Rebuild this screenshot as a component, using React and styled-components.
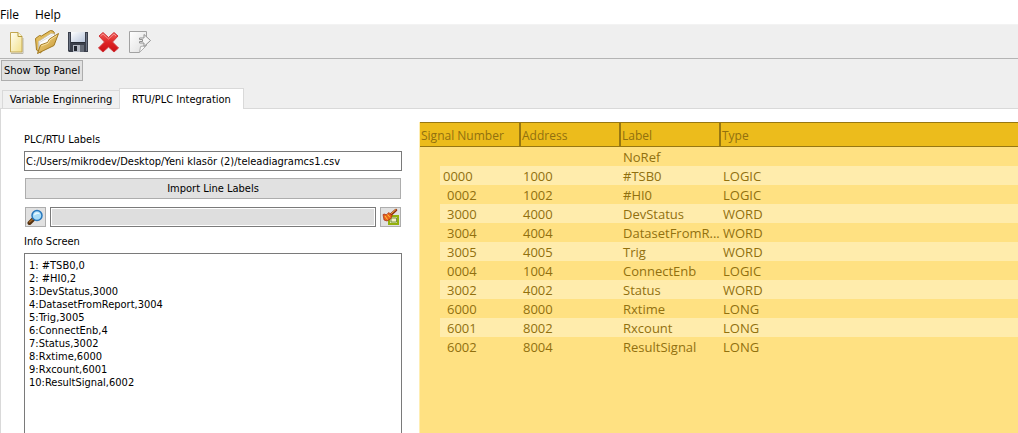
import React, { useState } from "react";
import styled, { createGlobalStyle } from "styled-components";

const uiFont = `"DejaVu Sans Condensed", "Noto Sans", sans-serif`;
const gridFont = `"Open Sans", "Noto Sans", sans-serif`;

const Global = createGlobalStyle`
  * { box-sizing: border-box; }
  html, body { margin: 0; height: 100%; overflow: hidden; }
  #root { height: 100%; }
  button, input, textarea { font: inherit; color: inherit; border-radius: 0; }
`;

const Window = styled.div`
  display: flex;
  flex-direction: column;
  height: 100vh;
  background: #efefef;
  color: #000;
  font: 11px/13px ${uiFont};
`;

const MenuBar = styled.nav`
  display: flex;
  gap: 16px;
  height: 25px;
  padding-top: 6px;
  background: #fff;
  border-bottom: 1px solid #f3f3f3;
`;

const MenuItem = styled.button`
  height: 17px;
  padding: 0;
  border: 0;
  background: none;
  font: 12px/17px ${gridFont};
`;

const ToolBar = styled.div`
  display: flex;
  align-items: center;
  gap: 6px;
  height: 34px;
  padding-left: 4px;
  border-bottom: 1px solid #b4b4b4;
`;

const ToolButton = styled.button`
  display: flex;
  padding: 0;
  border: 0;
  background: none;
  svg { display: block; }
`;

const PushButton = styled.button`
  height: 21px;
  padding: 0 2px;
  border: 1px solid #adadad;
  background: #e1e1e1;
  white-space: nowrap;
`;

const TopRow = styled.div`
  display: flex;
  padding: 1px 1px 7px;
`;

const Tabs = styled.div`
  display: flex;
  align-items: flex-end;
  padding-left: 2px;
`;

const Tab = styled.button`
  position: relative;
  width: ${(p) => (p.$active ? 125 : 117)}px;
  height: ${(p) => (p.$active ? 21 : 18)}px;
  margin-bottom: ${(p) => (p.$active ? -1 : 0)}px;
  padding: 0;
  border: 1px solid #d9d9d9;
  border-right-width: ${(p) => (p.$active ? 1 : 0)}px;
  border-bottom: 0;
  background: ${(p) => (p.$active ? "#fff" : "#f0f0f0")};
  white-space: nowrap;
`;

const Pane = styled.main`
  display: flex;
  flex: 1;
  min-height: 0;
  gap: 17px;
  padding-top: 13px;
  background: #fff;
  border: solid #d9d9d9;
  border-width: 1px 0 0 1px;
`;

const SidePanel = styled.section`
  display: flex;
  flex-direction: column;
  flex: 0 0 401px;
  padding: 11px 0 0 23px;
`;

const FieldLabel = styled.label`
  height: 18px;
`;

const PathInput = styled.input`
  width: 100%;
  height: 20px;
  margin-bottom: 7px;
  padding: 0 1px;
  border: 1px solid #7a7a7a;
  background: #fff;
`;

const Inset = styled.div`
  display: grid;
  padding: 0 1px;
  margin-bottom: 8px;
`;

const SearchRow = styled.div`
  display: flex;
  gap: 4px;
  padding: 0 1px;
  margin-bottom: 8px;
`;

const IconButton = styled.button`
  display: flex;
  align-items: center;
  justify-content: center;
  flex: 0 0 21px;
  height: 20px;
  padding: 0;
  border: 1px solid #adadad;
  background: #e1e1e1;
`;

const SearchInput = styled.input`
  flex: 1;
  min-width: 0;
  height: 20px;
  padding: 0 2px;
  border: 1px solid #7a7a7a;
  background: #dedede;
  box-shadow: inset 0 0 0 1px #fff;
`;

const InfoArea = styled.textarea`
  flex: 1;
  width: 100%;
  padding: 5px 4px;
  border: 1px solid #7a7a7a;
  border-bottom: 0;
  background: #fff;
  resize: none;
  overflow: hidden;
`;

const GridPanel = styled.section`
  flex: 1;
  min-width: 0;
  background: #ffe182;
  border-left: 1px solid #ffeeb4;
`;

const Grid = styled.table`
  width: 100%;
  table-layout: fixed;
  border-collapse: separate;
  border-spacing: 0;
  color: #91700f;
  font: 13px/17px ${gridFont};
`;

const HeadCell = styled.th`
  width: ${(p) => (p.$last ? "auto" : "100px")};
  height: 25px;
  padding: 2px 0 0 1px;
  border: solid #977712;
  border-width: 1px ${(p) => (p.$last ? 0 : 1)}px 1px ${(p) => (p.$first ? 0 : 1)}px;
  background: #ecbc1c;
  font-size: 12px;
  font-weight: 400;
  text-align: left;
`;

const Cell = styled.td`
  height: 19px;
  padding: 2px 0 0 3px;
  white-space: nowrap;
  background: ${(p) => (p.$stripe ? "#ffecac" : "transparent")};
`;

const SignalCell = styled.td`
  height: 19px;
  padding: 0 0 0 20px;
`;

const SignalValue = styled.div`
  height: 19px;
  padding: 2px 0 0 ${(p) => (p.$root ? 3 : 7)}px;
  background: ${(p) => (p.$stripe ? "#ffecac" : "transparent")};
`;

const NewIcon = () => (
  <svg width="24" height="26" viewBox="0 0 24 26">
    <defs>
      <linearGradient id="paper" x1="0" y1="0" x2="1" y2="1">
        <stop offset="0" stopColor="#fffef2" />
        <stop offset="1" stopColor="#f3e08a" />
      </linearGradient>
    </defs>
    <path d="M7 24.500h12V9" fill="none" stroke="#b9b5a6" />
    <path d="M6.500 3.500h7.500l4 4v15.500h-11.500z" fill="url(#paper)" stroke="#c2a650" />
    <path d="M14 3.500v4h4" fill="#fff8cf" stroke="#b49a3c" />
  </svg>
);

const OpenIcon = () => (
  <svg width="26" height="26" viewBox="0 0 26 26">
    <defs>
      <linearGradient id="folder" x1="0" y1="0" x2="1" y2="1">
        <stop offset="0" stopColor="#f7dc8c" />
        <stop offset="1" stopColor="#c2902c" />
      </linearGradient>
    </defs>
    <path d="M1.500 9.500l4-3 2 .5 9-5.500 2.500.5 1.500 2-14 20-4-3z" fill="#e2bc5c" stroke="#a27a22" />
    <path d="M4.500 21V12.500L17 4.500l3.500.5v8z" fill="#fdfdfd" stroke="#c4c0b4" strokeWidth=".8" />
    <path d="M5.500 20v-6.500l13-7.500" fill="none" stroke="#d4d4d4" strokeWidth=".8" />
    <path d="M3.500 24.500L6.500 16l7-2.500 2-3.500 9-5.500-4.500 12z" fill="url(#folder)" stroke="#a27a22" strokeLinejoin="round" />
    <path d="M7.300 16.800l6.700-2.500 2-3.500 7-4.300" fill="none" stroke="#fceab0" strokeWidth=".8" />
  </svg>
);

const SaveIcon = () => (
  <svg width="24" height="26" viewBox="0 0 24 26">
    <defs>
      <linearGradient id="metal" x1="0" y1="0" x2="1" y2="1">
        <stop offset="0" stopColor="#fff" />
        <stop offset="1" stopColor="#b9c6dc" />
      </linearGradient>
    </defs>
    <path d="M2 3h20v20H3l-1-1z" fill="#3b404c" />
    <path d="M3 4h1v17H3zM20 4h1v18h-1z" fill="#6c7484" />
    <path d="M5 3h14v10H5z" fill="url(#metal)" />
    <path d="M5 13h14v1H5z" fill="#272c36" />
    <path d="M7 16h11v7H7z" fill="#b4b9c3" />
    <path d="M8 17h3v5H8z" fill="#20242e" />
    <path d="M14 16h4v7h-4z" fill="#656b77" />
  </svg>
);

const DeleteIcon = () => (
  <svg width="24" height="26" viewBox="0 0 24 26">
    <defs>
      <linearGradient id="cross" x1="0" y1="0" x2="0" y2="1">
        <stop offset="0" stopColor="#f1615d" />
        <stop offset=".5" stopColor="#df2424" />
        <stop offset="1" stopColor="#c90f15" />
      </linearGradient>
    </defs>
    <path
      d="M7 3.500l5.500 5 5.500-5 4 3.500-5.500 6 6 6-4.500 4-5.500-5-5.500 5-4.500-4 6-6-5.500-6z"
      fill="url(#cross)" stroke="#d1363a" strokeLinejoin="round"
    />
    <path d="M4.500 7L7 5l5.500 5L18 5l2 2" fill="none" stroke="#f58f8b" />
  </svg>
);

const ExportIcon = () => (
  <svg width="26" height="26" viewBox="0 0 26 26">
    <defs>
      <linearGradient id="sheet" x1="0" y1="0" x2="1" y2="1">
        <stop offset="0" stopColor="#fff" />
        <stop offset="1" stopColor="#dedede" />
      </linearGradient>
    </defs>
    <path d="M3.500 2.500h17v14l-7 7h-10z" fill="url(#sheet)" stroke="#a2a2a2" />
    <path d="M13.500 23.500l1-6 6-1z" fill="#f9f9f9" stroke="#b0b0b0" />
    <path d="M13.500 9h4.500V5.500l6.500 6-6.500 6V14h-4.500v-1.500h3v-2h-3z" fill="#f6f6f6" stroke="#919191" />
  </svg>
);

const SearchIcon = () => (
  <svg width="17" height="17" viewBox="0 0 17 17">
    <path d="M2.500 14l3.500-3.500" stroke="#53300f" strokeWidth="4" strokeLinecap="round" />
    <path d="M2.500 13l3-2.500" stroke="#a66a29" strokeWidth="1.500" strokeLinecap="round" />
    <circle cx="10" cy="6.500" r="5" fill="#a9ddf8" stroke="#2878bd" strokeWidth="1.500" />
    <path d="M7 6.500c0-4 5-4 6-1-2-1-4 0-6 1z" fill="#e6f8ff" />
  </svg>
);

const ClearIcon = () => (
  <svg width="18" height="18" viewBox="0 0 18 18">
    <path d="M7 8h9v8H7z" fill="#dce5a7" stroke="#93b00c" strokeWidth="2" />
    <path d="M9 10h5.500v4H9z" fill="#f2f0c4" stroke="#5f7d2c" strokeWidth=".8" />
    <path d="M14 2L9 6.500" stroke="#8a2a10" strokeWidth="2.500" strokeLinecap="round" />
    <path d="M14 1.500L9.500 5.500" stroke="#f5ab3b" strokeLinecap="round" />
    <path d="M1 6.500l2-.5 1 1 3-2.500 3 3-1 3-4 2.500-3-1z" fill="#e8601c" stroke="#a32c10" strokeWidth=".7" />
    <path d="M3 8l2.500 3.500M5.500 6.500L8 9.500" stroke="#ffcf3a" />
  </svg>
);

const tools = [
  ["New", NewIcon],
  ["Open", OpenIcon],
  ["Save", SaveIcon],
  ["Delete", DeleteIcon],
  ["Export", ExportIcon],
];

const columns = ["Signal Number", "Address", "Label", "Type"];

const signals = [
  ["", "", "NoRef", ""],
  ["0000", "1000", "#TSB0", "LOGIC"],
  ["0002", "1002", "#HI0", "LOGIC"],
  ["3000", "4000", "DevStatus", "WORD"],
  ["3004", "4004", "DatasetFromR...", "WORD"],
  ["3005", "4005", "Trig", "WORD"],
  ["0004", "1004", "ConnectEnb", "LOGIC"],
  ["3002", "4002", "Status", "WORD"],
  ["6000", "8000", "Rxtime", "LONG"],
  ["6001", "8002", "Rxcount", "LONG"],
  ["6002", "8004", "ResultSignal", "LONG"],
];

const infoText = [
  "1: #TSB0,0",
  "2: #HI0,2",
  "3:DevStatus,3000",
  "4:DatasetFromReport,3004",
  "5:Trig,3005",
  "6:ConnectEnb,4",
  "7:Status,3002",
  "8:Rxtime,6000",
  "9:Rxcount,6001",
  "10:ResultSignal,6002",
].join("\n");

export default function App() {
  const [path, setPath] = useState("C:/Users/mikrodev/Desktop/Yeni klasör (2)/teleadiagramcs1.csv");
  const [query, setQuery] = useState("");

  return (
    <Window>
      <Global />
      <MenuBar>
        <MenuItem>File</MenuItem>
        <MenuItem>Help</MenuItem>
      </MenuBar>
      <ToolBar>
        {tools.map(([name, Icon]) => (
          <ToolButton key={name} aria-label={name}><Icon /></ToolButton>
        ))}
      </ToolBar>
      <TopRow>
        <PushButton>Show Top Panel</PushButton>
      </TopRow>
      <Tabs role="tablist">
        <Tab role="tab" aria-selected="false">Variable Enginnering</Tab>
        <Tab role="tab" aria-selected="true" $active>RTU/PLC Integration</Tab>
      </Tabs>
      <Pane>
        <SidePanel>
          <FieldLabel htmlFor="path">PLC/RTU Labels</FieldLabel>
          <PathInput id="path" value={path} onChange={(e) => setPath(e.target.value)} />
          <Inset>
            <PushButton>Import Line Labels</PushButton>
          </Inset>
          <SearchRow>
            <IconButton aria-label="Search"><SearchIcon /></IconButton>
            <SearchInput aria-label="Search text" value={query} onChange={(e) => setQuery(e.target.value)} />
            <IconButton aria-label="Clear" onClick={() => setQuery("")}><ClearIcon /></IconButton>
          </SearchRow>
          <FieldLabel htmlFor="info">Info Screen</FieldLabel>
          <InfoArea id="info" readOnly value={infoText} />
        </SidePanel>
        <GridPanel>
          <Grid>
            <thead>
              <tr>
                {columns.map((name, i) => (
                  <HeadCell key={name} $first={i === 0} $last={i === columns.length - 1}>{name}</HeadCell>
                ))}
              </tr>
            </thead>
            <tbody>
              {signals.map(([signal, ...rest], row) => (
                <tr key={row}>
                  <SignalCell>
                    <SignalValue $stripe={row % 2 === 1} $root={row === 1}>{signal}</SignalValue>
                  </SignalCell>
                  {rest.map((value, i) => (
                    <Cell key={i} $stripe={row % 2 === 1}>{value}</Cell>
                  ))}
                </tr>
              ))}
            </tbody>
          </Grid>
        </GridPanel>
      </Pane>
    </Window>
  );
}
